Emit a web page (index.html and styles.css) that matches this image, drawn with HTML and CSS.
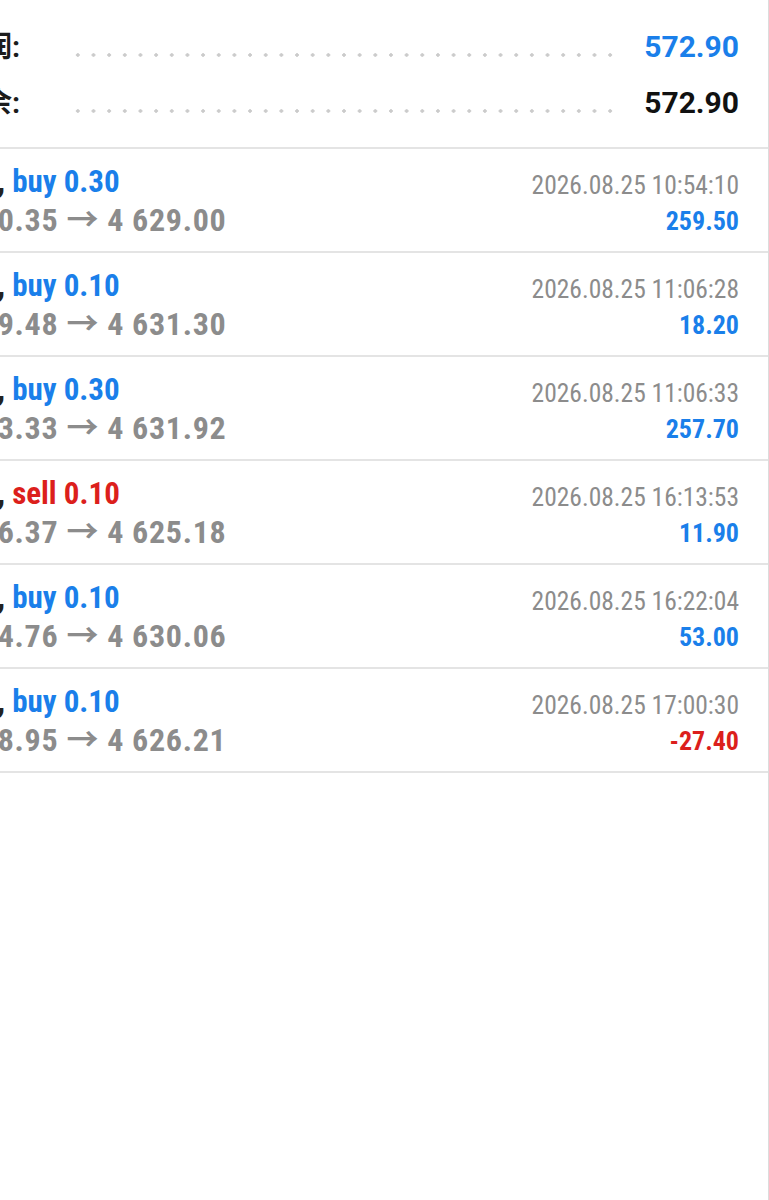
FILE: index.html
```html
<!DOCTYPE html>
<html lang="zh">

<head>
  <meta charset="UTF-8" />
  <meta name="viewport" content="width=device-width, initial-scale=1" />
  <title>历史</title>
  <link rel="stylesheet" href="styles.css">
</head>

<body>
  <div id="screen">
    <div class="summary">
      <div class="summary-row">
        <span class="summary-label">利润:</span>
        <span class="leader"></span>
        <span class="summary-value blue">572.90</span>
      </div>
      <div class="summary-row">
        <span class="summary-label">结余:</span>
        <span class="leader"></span>
        <span class="summary-value">572.90</span>
      </div>
    </div>

    <div class="deal">
      <div class="deal-main">
        <div class="deal-symbol">XAUUSD, <span class="blue">buy 0.30</span></div>
        <div class="deal-price">4 620.35 → 4 629.00</div>
      </div>
      <div class="deal-side">
        <div class="deal-time">2026.08.25 10:54:10</div>
        <div class="deal-profit blue">259.50</div>
      </div>
    </div>

    <div class="deal">
      <div class="deal-main">
        <div class="deal-symbol">XAUUSD, <span class="blue">buy 0.10</span></div>
        <div class="deal-price">4 629.48 → 4 631.30</div>
      </div>
      <div class="deal-side">
        <div class="deal-time">2026.08.25 11:06:28</div>
        <div class="deal-profit blue">18.20</div>
      </div>
    </div>

    <div class="deal">
      <div class="deal-main">
        <div class="deal-symbol">XAUUSD, <span class="blue">buy 0.30</span></div>
        <div class="deal-price">4 623.33 → 4 631.92</div>
      </div>
      <div class="deal-side">
        <div class="deal-time">2026.08.25 11:06:33</div>
        <div class="deal-profit blue">257.70</div>
      </div>
    </div>

    <div class="deal">
      <div class="deal-main">
        <div class="deal-symbol">XAUUSD, <span class="red">sell 0.10</span></div>
        <div class="deal-price">4 626.37 → 4 625.18</div>
      </div>
      <div class="deal-side">
        <div class="deal-time">2026.08.25 16:13:53</div>
        <div class="deal-profit blue">11.90</div>
      </div>
    </div>

    <div class="deal">
      <div class="deal-main">
        <div class="deal-symbol">XAUUSD, <span class="blue">buy 0.10</span></div>
        <div class="deal-price">4 624.76 → 4 630.06</div>
      </div>
      <div class="deal-side">
        <div class="deal-time">2026.08.25 16:22:04</div>
        <div class="deal-profit blue">53.00</div>
      </div>
    </div>

    <div class="deal">
      <div class="deal-main">
        <div class="deal-symbol">XAUUSD, <span class="blue">buy 0.10</span></div>
        <div class="deal-price">4 628.95 → 4 626.21</div>
      </div>
      <div class="deal-side">
        <div class="deal-time">2026.08.25 17:00:30</div>
        <div class="deal-profit red">-27.40</div>
      </div>
    </div>
  </div>
</body>

</html>
```

FILE: styles.css
```css
body {
  margin: 0;
  padding: 0;
  background: #ffffff;
  overflow: hidden;
  font-family: 'Roboto Condensed', 'Roboto', 'Noto Sans CJK SC', sans-serif;
}

#screen {
  width: 769px;
  min-height: 1200px;
  box-sizing: border-box;
  border-right: 1px solid #dcdcdc;
  overflow: hidden;
}

.blue {
  color: #1a7fea;
}

.red {
  color: #dc1f1c;
}

/* итоги сверху */
.summary {
  height: 149px;
  padding: 23px 29px 0 0;
  box-sizing: border-box;
  border-bottom: 2px solid #e4e4e4;
}

.summary-row {
  display: flex;
  align-items: baseline;
  height: 56px;
}

.summary-label {
  margin-left: -46px;
  font-family: 'Roboto', 'Noto Sans CJK SC', sans-serif;
  font-weight: bold;
  font-size: 29px;
  color: #1c1c1c;
}

.leader {
  flex: 1;
  height: 4px;
  margin: 0 24px 2px 50px;
  background-image: radial-gradient(circle, #cbcbcb 1.5px, transparent 2px);
  background-size: 15.67px 4px;
  background-repeat: repeat-x;
}

.summary-value {
  font-family: 'Roboto', sans-serif;
  font-weight: bold;
  font-size: 30px;
  color: #111;
}

.summary-value.blue {
  color: #1a7fea;
}

/* сделки */
.deal {
  display: flex;
  justify-content: space-between;
  height: 104px;
  padding: 14px 29px 0 0;
  box-sizing: border-box;
  border-bottom: 2px solid #e4e4e4;
}

.deal-main {
  margin-left: -106px;
  font-weight: bold;
  font-size: 31px;
  line-height: 38px;
}

.deal-symbol {
  color: #222;
}

.deal-price {
  margin-left: 45px;
  font-size: 32px;
  letter-spacing: 0.7px;
  color: #8c8c8c;
}

.deal-side {
  padding-top: 4px;
  text-align: right;
  line-height: 36px;
}

.deal-time {
  font-size: 25.5px;
  color: #8c8c8c;
}

.deal-profit {
  font-size: 26px;
  font-weight: bold;
}
```
